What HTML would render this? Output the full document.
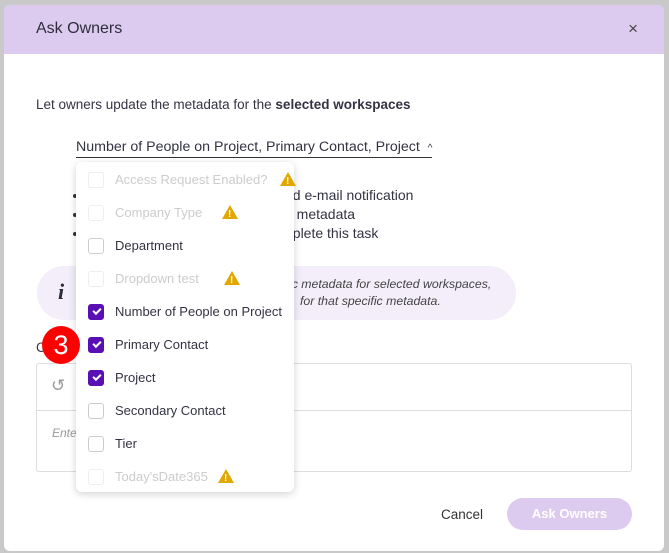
<!DOCTYPE html>
<html><head><style>
*{box-sizing:border-box;margin:0;padding:0}
body{width:669px;height:553px;background:#c9c9c9;font-family:"Liberation Sans",sans-serif;position:relative;overflow:hidden;color:#333344}
.modal{position:absolute;left:4px;top:5px;width:660px;height:546px;background:#fff;border-radius:6px;overflow:hidden}
.hdr{height:49px;background:#dccbee;position:relative}
.hdr h1{position:absolute;left:32px;top:15px;font-size:16px;font-weight:normal;color:#2e2e3e}
.x{position:absolute;right:26px;top:14px;font-size:17px;color:#444}
.a{position:absolute;font-size:13.5px;white-space:nowrap}
.info{position:absolute;left:33px;top:261px;width:479px;height:54px;background:#f3eef9;border-radius:27px}
.ed{position:absolute;left:32px;top:358px;width:596px;height:109px;border:1px solid #ddd;border-radius:3px}
.dd{position:absolute;left:76px;top:162px;width:218px;height:330px;background:#fff;border-radius:6px;box-shadow:0 2px 8px rgba(0,0,0,.18)}
.it{position:absolute;left:12px;height:18px;font-size:13px;white-space:nowrap;line-height:16px}
.cb{position:absolute;left:0;top:0;width:16px;height:16px;border:1px solid #ccc;border-radius:3px;background:#fff}
.it.dis .cb{border-color:#eee}
.it.dis span{color:#ccc}
.it span{position:absolute;left:27px;top:0;color:#333344}
.cb.on{background:#5a0fb5;border-color:#5a0fb5}
.cb.on:after{content:"";position:absolute;left:4px;top:3px;width:6px;height:3px;border-left:2px solid #fff;border-bottom:2px solid #fff;transform:rotate(-45deg)}
.w{position:absolute;top:0;width:0;height:0;border-left:8px solid transparent;border-right:8px solid transparent;border-bottom:14px solid #e0a800}
.w:after{content:"!";position:absolute;left:-2px;top:2px;font-size:10px;font-weight:bold;color:#fff}
.bl{position:absolute;left:69px;width:4px;height:4px;border-radius:50%;background:#333}
</style></head><body>
<div class="modal">
<div class="hdr"><h1>Ask Owners</h1><div class="x">×</div></div>
<div class="a" style="left:32px;top:92px">Let owners update the metadata for the <b>selected workspaces</b></div>
<div class="a" style="left:72px;top:134px;font-size:14.2px;border-bottom:1.5px solid #333;padding-bottom:2px">Number of People on Project, Primary Contact, Project &nbsp;<span style="font-size:10px">^</span></div>
<div class="bl" style="top:189px"></div><div class="bl" style="top:208px"></div><div class="bl" style="top:227px"></div>
<div class="a" style="left:281px;top:182px;font-size:14px">nd e-mail notification</div>
<div class="a" style="left:281px;top:201px;font-size:14px">e metadata</div>
<div class="a" style="left:281px;top:220px;font-size:14px">nplete this task</div>
<div class="info"><span style="position:absolute;left:21px;top:13px;font-family:'Liberation Serif',serif;font-style:italic;font-weight:bold;font-size:22px;color:#2a2a3a">i</span>
<span style="position:absolute;left:252px;top:11px;font-size:12.3px;font-style:italic;color:#444;white-space:nowrap">ic metadata for selected workspaces,</span>
<span style="position:absolute;left:263px;top:28px;font-size:12.3px;font-style:italic;color:#444;white-space:nowrap">for that specific metadata.</span></div>
<div class="a" style="left:32px;top:335px">C</div>
<div class="ed"><div style="position:absolute;left:0;right:0;top:46px;border-top:1px solid #ddd"></div>
<span style="position:absolute;left:14px;top:12px;font-size:17px;color:#999">↺</span>
<span style="position:absolute;left:15px;top:62px;font-size:12px;font-style:italic;color:#999">Ente</span></div>
<div class="a" style="left:437px;top:502px;color:#333">Cancel</div>
<div style="position:absolute;left:503px;top:493px;width:125px;height:32px;border-radius:16px;background:#dccbee;color:#fff;font-weight:bold;font-size:13px;text-align:center;line-height:32px">Ask Owners</div>
</div>
<div class="dd">
<div class="it dis" style="top:10px"><div class="cb"></div><span>Access Request Enabled?</span><div class="w" style="left:192px"></div></div>
<div class="it dis" style="top:43px"><div class="cb"></div><span>Company Type</span><div class="w" style="left:134px"></div></div>
<div class="it" style="top:76px"><div class="cb"></div><span>Department</span></div>
<div class="it dis" style="top:109px"><div class="cb"></div><span>Dropdown test</span><div class="w" style="left:136px"></div></div>
<div class="it" style="top:142px"><div class="cb on"></div><span>Number of People on Project</span></div>
<div class="it" style="top:175px"><div class="cb on"></div><span>Primary Contact</span></div>
<div class="it" style="top:208px"><div class="cb on"></div><span>Project</span></div>
<div class="it" style="top:241px"><div class="cb"></div><span>Secondary Contact</span></div>
<div class="it" style="top:274px"><div class="cb"></div><span>Tier</span></div>
<div class="it dis" style="top:307px"><div class="cb"></div><span>Today'sDate365</span><div class="w" style="left:130px"></div></div>
</div>
<div style="position:absolute;left:42px;top:326px;width:38px;height:38px;border-radius:50%;background:#f00;color:#fff;font-size:27px;text-align:center;line-height:38px">3</div>
</body></html>
